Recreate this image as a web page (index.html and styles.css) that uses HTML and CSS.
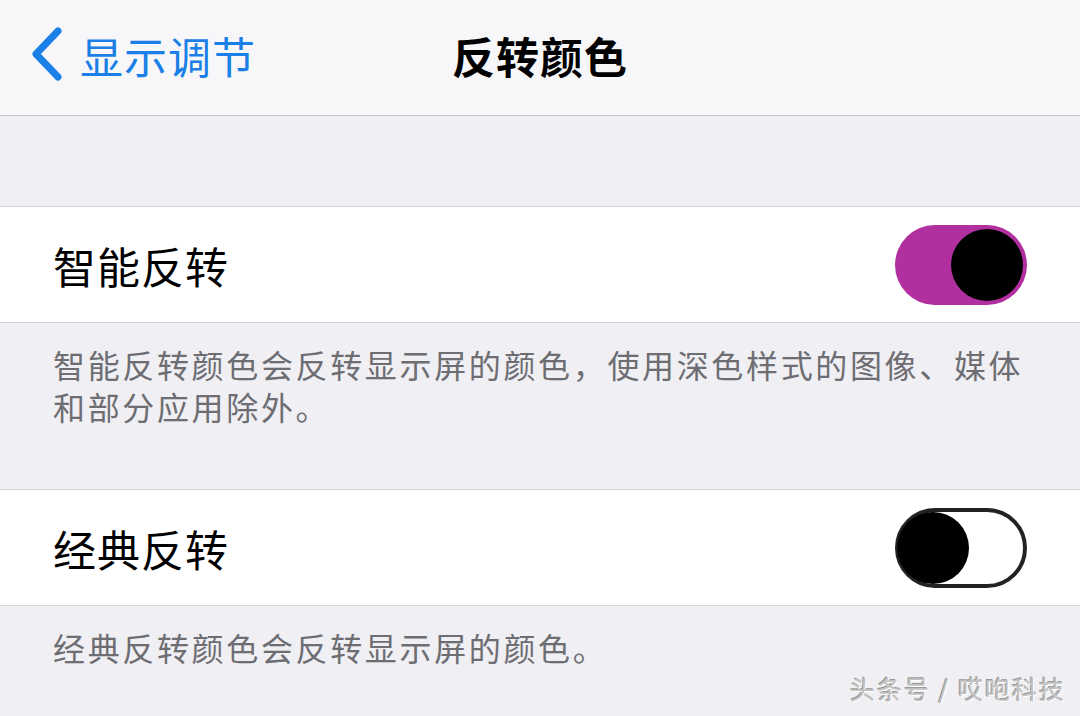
FILE: index.html
```html
<html>
    <head>
        <meta charset="utf-8">
        <link rel="stylesheet" href="styles.css">
    </head>
    <body>
        <div class="navbar">
            <a class="nav-back">
                <svg class="chevron" width="40" height="60" viewBox="0 0 40 60">
                    <polyline points="29,6 7,29 29,52" fill="none" stroke="#1a7fe6" stroke-width="7" stroke-linecap="round" stroke-linejoin="round"/>
                </svg>
                <span>显示调节</span>
            </a>
            <div class="nav-title">反转颜色</div>
            <div></div>
        </div>

        <div class="spacer"></div>

        <div class="cell">
            <span class="cell-label">智能反转</span>
            <span class="switch switch-on"><span class="knob"></span></span>
        </div>
        <div class="cell-footer footer-tall">智能反转颜色会反转显示屏的颜色，使用深色样式的图像、媒体和部分应用除外。</div>

        <div class="cell">
            <span class="cell-label">经典反转</span>
            <span class="switch switch-off"><span class="knob"></span></span>
        </div>
        <div class="cell-footer footer-last">经典反转颜色会反转显示屏的颜色。</div>

        <div class="watermark">头条号 / 哎咆科技</div>
    </body>
</html>
```

FILE: styles.css
```css
body {
    margin: 0;
    width: 1080px;
    height: 716px;
    overflow: hidden;
    background-color: #efeff4;
    font-family: "Noto Sans CJK SC", "Noto Sans", sans-serif;
    position: relative;
}

.navbar {
    height: 116px;
    box-sizing: border-box;
    padding-bottom: 6px;
    background-color: #f7f7f9;
    border-bottom: 1px solid #c4c4c8;
    display: grid;
    grid-template-columns: 1fr auto 1fr;
    align-items: center;
}

.nav-back {
    display: flex;
    align-items: center;
    padding-left: 29px;
    color: #1a7fe6;
    font-size: 43px;
}

.nav-back span {
    margin-left: 11px;
    letter-spacing: 1px;
}

.nav-title {
    font-size: 43px;
    font-weight: 700;
    color: #000;
    letter-spacing: 1px;
}

.spacer {
    height: 90px;
    border-bottom: 1px solid #d4d4d8;
}

.cell {
    height: 115px;
    background-color: #fff;
    border-bottom: 1px solid #d4d4d8;
    display: flex;
    align-items: center;
    justify-content: space-between;
    padding: 0 53px 0 53px;
}

.cell-label {
    font-size: 43px;
    color: #000;
    letter-spacing: 1px;
}

.switch {
    display: block;
    box-sizing: border-box;
    width: 132px;
    height: 80px;
    border-radius: 40px;
    position: relative;
}

.switch-on {
    background-color: #b12f9e;
}

.switch-off {
    background-color: #fff;
    border: 4px solid #222;
}

.knob {
    position: absolute;
    width: 72px;
    height: 72px;
    border-radius: 50%;
    background-color: #000;
}

.switch-on .knob {
    right: 4px;
    top: 4px;
}

.switch-off .knob {
    left: -2px;
    top: 0;
}

.cell-footer {
    padding: 20px 53px 22px 53px;
    font-size: 32px;
    line-height: 42px;
    letter-spacing: 2.65px;
    color: #6d6d72;
    border-bottom: 1px solid #d4d4d8;
}

.footer-tall {
    height: 124px;
}

.footer-last {
    border-bottom: none;
}

.watermark {
    position: absolute;
    right: 14px;
    bottom: 10px;
    font-size: 25px;
    letter-spacing: 2px;
    color: #c2c2c2;
    text-shadow: 1px 1px 0 #fff, -1px -1px 0 #9a9a9a;
}
```
